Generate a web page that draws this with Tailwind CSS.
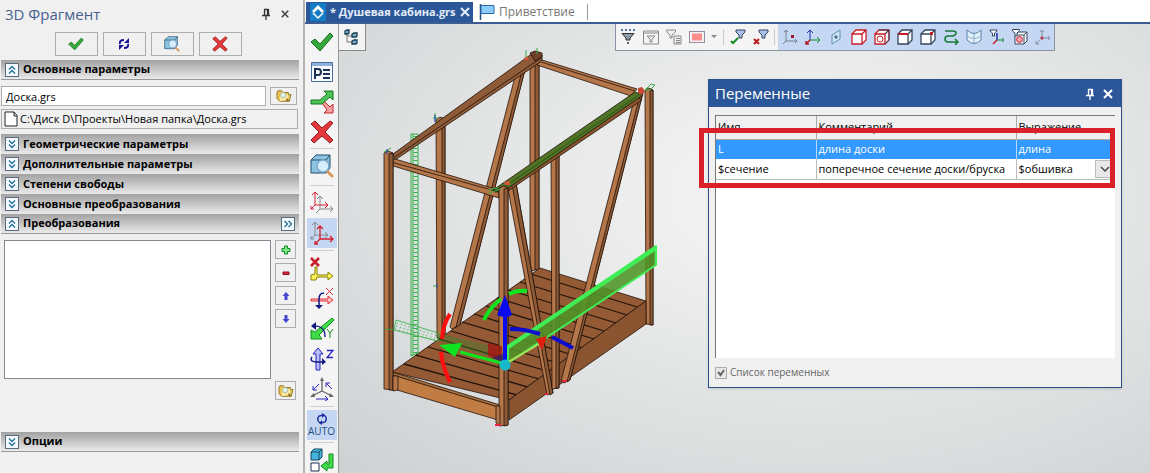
<!DOCTYPE html>
<html lang="ru">
  <head>
    <meta charset="UTF-8" />
    <meta name="viewport" content="width=device-width, initial-scale=1.0" />
    <title>Душевая кабина.grs</title>
    <script src="https://cdn.jsdelivr.net/npm/@tailwindcss/browser@4"></script>
  </head>
  <body class="flex h-screen overflow-hidden bg-[#f0f0f0] font-['Open_Sans',sans-serif] text-[11px] text-black">
    <!-- Shared icons -->
    <svg class="hidden">
      <symbol id="check" viewBox="0 0 24 24">
        <path d="M1 12l4-3 5 5L20 3l3 3L10 21z" fill="#35a83a" stroke="#146b1c" />
      </symbol>
      <symbol id="cross" viewBox="0 0 24 24">
        <path d="M1 4l4-3 7 7 8-7 3 2-8 9 8 8-3 3-8-7-8 7-3-3 8-8z" fill="#e2383c" stroke="#8f1a20" />
      </symbol>
      <symbol id="lens" viewBox="0 0 24 24">
        <path d="M1 6l5-5h14v13l-4 5H1z" fill="#8cc4e2" stroke="#234c68" />
        <path d="M1 6h15v13M16 6l4-5" fill="none" stroke="#234c68" />
        <path d="M17 17l5 5" stroke="#d89a5a" stroke-width="3" stroke-linecap="round" />
        <circle cx="13" cy="12" r="6" fill="#d6edfb" stroke="#7ba8c6" stroke-width="1.500" />
      </symbol>
      <symbol id="folder" viewBox="0 0 18 16">
        <path d="M1 4l1-2h4l2 2h6v3l3-1-2 8H4L1 11z" fill="#e8c350" stroke="#8a6c1a" />
        <path d="M5 6h9v6l-10 2z" fill="#fbe9a6" />
        <circle cx="8" cy="7" r="3" fill="#e3f3f4" stroke="#a9b6a0" />
        <path d="M12 11l2 3" stroke="#8a6c1a" stroke-width="2" />
      </symbol>
      <symbol id="up" viewBox="0 0 14 14">
        <rect x="0.5" y="0.5" width="13" height="13" fill="#f4f9fd" stroke="#5a6b7c" />
        <path d="M4 6.500l3-3 3 3M4 10.500l3-3 3 3" fill="none" stroke="#1f6d9c" stroke-width="1.300" />
      </symbol>
      <symbol id="down" viewBox="0 0 14 14">
        <rect x="0.5" y="0.5" width="13" height="13" fill="#f4f9fd" stroke="#5a6b7c" />
        <path d="M4 3.500l3 3 3-3M4 7.500l3 3 3-3" fill="none" stroke="#1f6d9c" stroke-width="1.300" />
      </symbol>
      <symbol id="pin" viewBox="0 0 10 12">
        <path d="M3 1.500h4.500M3.500 1v6M6.500 1v6M7.500 1v6M1 7.500h8M5 8v4" fill="none" stroke="currentColor" stroke-width="1.300" />
      </symbol>
      <symbol id="close" viewBox="0 0 10 10">
        <path d="M1 1l8 8M9 1l-8 8" stroke="currentColor" stroke-width="2" />
      </symbol>
      <symbol id="cube" viewBox="0 0 16 16">
        <path d="M1 5l4-4h10v10l-4 4H1z" fill="#fff" />
        <path d="M1 5l4-4h10v10l-4 4M11 5l4-4" fill="none" stroke="currentColor" stroke-width="1.300" />
        <path d="M1 5h10v10H1z" fill="none" stroke="currentColor" stroke-width="1.300" />
      </symbol>
    </svg>

    <!-- Parameters panel -->
    <aside class="flex w-[300px] shrink-0 flex-col px-px">
      <header class="flex h-7 items-center gap-2 pr-2 pl-1">
        <h1 class="flex-1 text-[15px] text-[#45608f]">3D Фрагмент</h1>
        <button aria-label="Закрепить"><svg class="h-3 w-2.5 text-[#333]"><use href="#pin" /></svg></button>
        <button aria-label="Закрыть" class="p-0.5"><svg class="h-2 w-2 text-[#444]" viewBox="0 0 10 10"><use href="#close" /></svg></button>
      </header>
      <div class="mt-1 mb-1 flex justify-center gap-[5px] pr-1">
        <button aria-label="Применить" class="flex h-6 w-[43px] items-center justify-center border border-[#adadad]"><svg class="h-4 w-4"><use href="#check" /></svg></button>
        <button aria-label="Обновить" class="flex h-6 w-[43px] items-center justify-center border border-[#adadad]">
          <svg class="h-3.5 w-3" viewBox="0 0 12 14" fill="none"><path d="M2 7q-1-4 4-4M10 7q1 4-4 4" stroke="#1a1298" stroke-width="2" /><path d="M6 6h5V1zM6 8H1v5z" fill="#1a1298" /></svg>
        </button>
        <button aria-label="Просмотр" class="flex h-6 w-[43px] items-center justify-center border border-[#adadad]"><svg class="h-4 w-4"><use href="#lens" /></svg></button>
        <button aria-label="Отмена" class="flex h-6 w-[43px] items-center justify-center border border-[#adadad]"><svg class="h-4 w-4"><use href="#cross" /></svg></button>
      </div>

      <h2 class="flex h-5 items-center gap-1 border-b border-[#999] bg-linear-to-b from-[#a2a2a2] to-[#eaeaea] pl-1 font-bold"><svg class="h-3.5 w-3.5"><use href="#up" /></svg>Основные параметры</h2>
      <div class="mt-1.5 flex items-center justify-between pr-0.5">
        <input type="text" aria-label="Файл" value="Доска.grs" class="h-5 w-[265px] border border-[#adadad] bg-white px-1" />
        <button aria-label="Открыть" class="flex h-[18px] w-[27px] items-center justify-center border border-[#adadad]"><svg class="h-3.5 w-4"><use href="#folder" /></svg></button>
      </div>
      <div class="mt-[3px] mr-px mb-[5px] flex h-5 items-center gap-0.5 border border-[#adadad] pl-0.5">
        <svg class="h-4 w-3.5" viewBox="0 0 14 16"><path d="M1 1h9l3 3.500V15H1z" fill="#fff" stroke="#222" /><path d="M10 1v4h3" fill="none" stroke="#222" /></svg>
        C:\Диск D\Проекты\Новая папка\Доска.grs
      </div>
      <h2 class="flex h-5 items-center gap-1 bg-linear-to-b from-[#a2a2a2] to-[#eaeaea] pl-1 font-bold"><svg class="h-3.5 w-3.5"><use href="#down" /></svg>Геометрические параметры</h2>
      <h2 class="flex h-5 items-center gap-1 bg-linear-to-b from-[#a2a2a2] to-[#eaeaea] pl-1 font-bold"><svg class="h-3.5 w-3.5"><use href="#down" /></svg>Дополнительные параметры</h2>
      <h2 class="flex h-5 items-center gap-1 bg-linear-to-b from-[#a2a2a2] to-[#eaeaea] pl-1 font-bold"><svg class="h-3.5 w-3.5"><use href="#down" /></svg>Степени свободы</h2>
      <h2 class="flex h-5 items-center gap-1 bg-linear-to-b from-[#a2a2a2] to-[#eaeaea] pl-1 font-bold"><svg class="h-3.5 w-3.5"><use href="#down" /></svg>Основные преобразования</h2>
      <h2 class="flex h-5 items-center gap-1 border-b border-[#999] bg-linear-to-b from-[#a2a2a2] to-[#eaeaea] px-1 font-bold">
        <svg class="h-3.5 w-3.5"><use href="#up" /></svg><span class="flex-1">Преобразования</span>
        <svg class="h-3.5 w-3.5 rotate-90"><use href="#up" /></svg>
      </h2>

      <div class="mt-1.5 flex gap-1 pr-[3px] pl-[3px]">
        <div class="h-[139px] flex-1 border border-[#828790] bg-white"></div>
        <div class="flex w-[21px] flex-col gap-1">
          <button aria-label="Добавить" class="flex h-[19px] items-center justify-center border border-[#adadad]"><svg class="h-2.5 w-2.5" viewBox="0 0 10 10"><path d="M3.500 1h3v2.500H9v3H6.500V9h-3V6.500H1v-3h2.500z" fill="#7ce887" stroke="#128a20" /></svg></button>
          <button aria-label="Удалить" class="flex h-[19px] items-center justify-center border border-[#adadad]"><svg class="h-2.5 w-2.5" viewBox="0 0 10 10"><path d="M2 4h6v2.500H2z" fill="#d93545" stroke="#8f1020" /></svg></button>
          <button aria-label="Вверх" class="flex h-[19px] items-center justify-center border border-[#adadad]"><svg class="h-2.5 w-2.5" viewBox="0 0 10 10"><path d="M5 1l3.500 4h-2v4h-3V5h-2z" fill="#4246d0" /></svg></button>
          <button aria-label="Вниз" class="flex h-[19px] items-center justify-center border border-[#adadad]"><svg class="h-2.5 w-2.5" viewBox="0 0 10 10"><path d="M5 9l3.500-4h-2V1h-3v4h-2z" fill="#4246d0" /></svg></button>
        </div>
      </div>
      <div class="mt-0.5 mb-8 flex justify-end pr-[3px]">
        <button aria-label="Открыть набор" class="flex h-[19px] w-[21px] items-center justify-center border border-[#adadad]"><svg class="h-3.5 w-4"><use href="#folder" /></svg></button>
      </div>
      <h2 class="flex h-5 items-center gap-1 border-b border-[#999] bg-linear-to-b from-[#a2a2a2] to-[#eaeaea] pl-1 font-bold"><svg class="h-3.5 w-3.5"><use href="#down" /></svg>Опции</h2>
    </aside>

    <main class="ml-[3px] flex min-w-0 flex-1 flex-col border-l-2 border-[#b4b4b4]">
      <!-- Document tabs -->
      <nav class="flex h-6 shrink-0 items-end border-b-2 border-[#3b5d92] bg-white">
        <a href="#" class="ml-px flex h-5 w-[167px] items-center gap-1 bg-[#2b579a] pl-1 font-bold whitespace-nowrap text-[#e4edf8]">
          <svg class="h-5 w-4 shrink-0" viewBox="0 0 16 18"><path d="M0 0h16v18H0z" fill="#147bc4" /><path d="M8 2l6 6-2 2-4-4-4 4-2-2zM2 10l2 0 4 4 4-4h2l-6 6z" fill="#fff" /></svg>
          <span class="flex-1">* Душевая кабина.grs</span>
          <svg class="mr-1 h-2.5 w-2.5 shrink-0"><use href="#close" /></svg>
        </a>
        <a href="#" class="flex h-5 items-center gap-1 pl-1.5 text-xs text-[#777]">
          <svg class="h-4 w-4" viewBox="0 0 16 16"><path d="M1.500 0v16" stroke="#234f83" stroke-width="1.500" /><path d="M2 1.500h13v8H2z" fill="#8dccfa" stroke="#2b6ba8" /></svg>
          Приветствие
        </a>
        <span class="mb-0.5 ml-3 h-4 w-px bg-[#999]"></span>
      </nav>

      <div class="flex min-h-0 flex-1">
        <!-- Command bar -->
        <div class="flex w-[34px] shrink-0 flex-col items-center border-r border-[#999] bg-[#f4f4f4] pt-[3px]">
          <button aria-label="Завершить" class="flex h-[30px] w-[30px] shrink-0 items-center justify-center"><svg class="h-6 w-6"><use href="#check" /></svg></button>
          <button aria-label="Параметры" class="flex h-[30px] w-[30px] shrink-0 items-center justify-center">
            <svg class="h-6 w-6" viewBox="0 0 24 24"><path d="M1.500 2.500h21v19h-21z" fill="#f8fbff" stroke="#4a6f9f" /><path d="M2 3h20v3H2z" fill="#8fb0dd" /><path d="M5 19V9h3a2.500 2.500 0 010 6H5M13 10h7M13 14h7M13 18h7" fill="none" stroke="#1c3154" stroke-width="2" /></svg>
          </button>
          <button aria-label="Варианты" class="flex h-[30px] w-[30px] shrink-0 items-center justify-center">
            <svg class="h-6 w-6" viewBox="0 0 24 24"><path d="M12 13l2-2 6 6 3-3v9h-9l3-3z" fill="#f4a0a0" stroke="#c02a2a" /><path d="M1 10h9l7-6-3-3h9v9l-3-3-8 7H1z" fill="#4cc456" stroke="#14751f" /></svg>
          </button>
          <button aria-label="Отменить" class="flex h-[30px] w-[30px] shrink-0 items-center justify-center"><svg class="h-6 w-6"><use href="#cross" /></svg></button>
          <hr class="mt-px mb-0.5 w-6 border-[#d0d0d0]" />
          <button aria-label="Предпросмотр" class="flex h-[30px] w-[30px] shrink-0 items-center justify-center"><svg class="h-6 w-6"><use href="#lens" /></svg></button>
          <hr class="mt-1 mb-0.5 w-6 border-[#d0d0d0]" />
          <button aria-label="Исходная система координат" class="flex h-[30px] w-[30px] shrink-0 items-center justify-center">
            <svg class="h-6 w-6" viewBox="0 0 24 24" fill="none"><path d="M10 18V5M7 8l3-3 3 3M10 18h13M20 15l3 3-3 3M10 18l-4 4" stroke="#888" /><path d="M5 14V1M2 4l3-3 3 3M5 14h13M15 11l3 3-3 3M5 14l-4 4M1 15v3h3" stroke="#d3202d" /></svg>
          </button>
          <button aria-label="Целевая система координат" class="flex h-[30px] w-[30px] shrink-0 items-center justify-center bg-[#c5d7f2]">
            <svg class="h-6 w-6" viewBox="0 0 24 24" fill="none"><path d="M5 14V1M2 4l3-3 3 3M5 14h13M15 11l3 3-3 3M5 14l-4 4M1 15v3h3" stroke="#888" /><path d="M10 18V5M7 8l3-3 3 3M10 18h13M20 15l3 3-3 3M10 18l-5 5M5 20v3h3" stroke="#d3202d" stroke-width="1.300" /></svg>
          </button>
          <hr class="mt-0.5 mb-[3px] w-6 border-[#d0d0d0]" />
          <button aria-label="Сбросить привязку" class="flex h-[30px] w-[30px] shrink-0 items-center justify-center">
            <svg class="h-6 w-6" viewBox="0 0 24 24"><path d="M1 1l8 8M9 1l-8 8" stroke="#c81e28" stroke-width="2.500" /><path d="M5 10h2v8h11v-3l5 4-5 4v-3H7l-1 3H1v-5l4-1z" fill="#fff35a" stroke="#8a7f00" /></svg>
          </button>
          <button aria-label="Поворот вокруг X" class="flex h-[30px] w-[30px] shrink-0 items-center justify-center">
            <svg class="h-6 w-6" viewBox="0 0 24 24" fill="none"><path d="M1 12h17V9l5 4-5 4v-3H1z" fill="#ffc0c0" stroke="#e0303a" /><path d="M16 1l7 7M23 1l-7 7" stroke="#e0303a" /><path d="M14 6q-5 0-5 6v7" stroke="#101a80" stroke-width="1.500" /><path d="M5 18h8l-4 4z" fill="#101a80" /></svg>
          </button>
          <button aria-label="Поворот вокруг Y" class="flex h-[30px] w-[30px] shrink-0 items-center justify-center">
            <svg class="h-6 w-6" viewBox="0 0 24 24" fill="none"><path d="M22 1l2 2L9 18l3 4H1V13l4 2z" fill="#3fdc4a" stroke="#149020" /><path d="M17 12l3 4 3-4M20 16v5" stroke="#149020" /><path d="M3 9q12-1 12 11" stroke="#101a80" stroke-width="1.300" /><path d="M6 5v8L1 9z" fill="#101a80" /></svg>
          </button>
          <button aria-label="Поворот вокруг Z" class="flex h-[30px] w-[30px] shrink-0 items-center justify-center">
            <svg class="h-6 w-6" viewBox="0 0 24 24" fill="none"><path d="M8 1l5 6h-3v16H6V7H3z" fill="#b9bdf8" stroke="#2424c0" /><path d="M17 3.500h6l-6 7h6" stroke="#2424c0" stroke-width="1.300" /><path d="M2 10q-3 5 5 5h6" stroke="#101a80" stroke-width="1.500" /><path d="M12 11v7l4-3z" fill="#101a80" /></svg>
          </button>
          <button aria-label="Изометрия" class="flex h-[30px] w-[30px] shrink-0 items-center justify-center">
            <svg class="h-6 w-6" viewBox="0 0 24 24" fill="none"><path d="M12 14V2M12 14L2 19M12 14l10 5" stroke="#666" stroke-width="1.300" /><path d="M10 4l2-4 2 4zM4 16l-4 4h5zM20 16l4 4h-5z" fill="#666" /><path d="M9 7l-6 6v-4M3 13h4M22 12l-6-6v4M16 6h4M6 22h12M15 19l3 3-3 2" stroke="#2424c0" /></svg>
          </button>
          <hr class="mt-0.5 mb-[3px] w-6 border-[#d0d0d0]" />
          <button class="flex h-[30px] w-[30px] shrink-0 flex-col items-center justify-center bg-[#c5d7f2] text-[10px] leading-3 text-[#234f83]">
            <svg class="h-3 w-3" viewBox="0 0 12 12" fill="none"><path d="M4 10Q0 7 3 3l4-1M8 2q4 3 1 7l-4 1" stroke="#1a2aa0" stroke-width="1.400" /><path d="M6 0l3 2-3 3zM6 7l-3 3 3 2z" fill="#1a2aa0" /></svg>
            AUTO
          </button>
          <hr class="mt-0.5 mb-0.5 w-6 border-[#d0d0d0]" />
          <button aria-label="Вставить" class="flex h-[30px] w-[30px] shrink-0 items-center justify-center">
            <svg class="h-6 w-6" viewBox="0 0 24 24"><path d="M1 4l3-3h8v8l-3 3H1z" fill="#46b5dd" stroke="#12455c" /><path d="M1 4h8v8M9 4l3-3" fill="none" stroke="#12455c" /><path d="M1 15h8v8H1z" fill="#fff" stroke="#1c3154" /><path d="M19 6h4v14h-6v3l-6-5 6-5v3h2z" fill="#3fdc4a" stroke="#128a20" /></svg>
          </button>
        </div>

        <!-- 3D view -->
        <section class="relative flex-1 overflow-hidden bg-radial-[at_58%_38%] from-[#f0f0f0] from-20% to-[#cdd1d2]">
          <button aria-label="Дерево модели" class="absolute top-0 left-0 flex h-[27px] w-[27px] items-center justify-center border-r border-b border-[#888] bg-[#f4f4f4]">
            <svg class="h-4 w-4" viewBox="0 0 16 16"><path d="M3 5v8h5M3 7h5" fill="none" stroke="#777" /><path d="M1 2l2-1h2v3L4 5H1zM8 5l2-1h3v3l-1 1H8zM8 12l2-1h3v3l-1 1H8z" fill="#7bb0c8" stroke="#183c50" stroke-width="1.300" /></svg>
          </button>

          <svg class="absolute top-[21px] left-[41px] h-[385px] w-[290px]" viewBox="380 45 290 385" stroke-linejoin="round">
            <!-- Back frame -->
            <g fill="#b5764a" stroke="#22130a" stroke-width=".8">
              <path d="M436 120l4-3 5 2v219h-8z" /><path d="M442 121l3-1v218h-3z" fill="#8f5a36" />
              <path d="M530 62h9v206l-9 4z" /><path d="M535 62h4v207l-4 1z" fill="#8f5a36" />
              <path d="M645 90l4-2 4 2v235l-7-1z" /><path d="M650 91l3-1v235h-3z" fill="#8f5a36" />
            </g>
            <path d="M411 134h7v219l-7 3zM413 134v221" fill="none" stroke="#2faf43" />
            <path d="M415.500 136v218" stroke="#2faf43" stroke-width="4" stroke-dasharray="1 3" />
            <!-- Floor -->
            <g stroke="#22130a" stroke-width=".8">
              <path d="M392 372l148-104 106 33-137 99z" fill="#935a35" />
              <path d="M404 364l113 31M416 355l112 32M428 347l111 32M439 339l111 33M451 331l110 33M462 322l111 33M474 314l109 34M486 306l108 33M497 298l107 33M509 290l107 33M520 282l107 33M531 274l106 33" fill="none" stroke-width="1.300" />
              <path d="M392 372l108 33v3l-108-33z" fill="#a9703f" />
              <path d="M396 376l102 31v13l-101-30z" fill="#c07c42" />
              <path d="M509 400l137-99v23l-137 96z" fill="#8a5430" />
            </g>
            <!-- Braces and beams -->
            <g fill="#b5764a" stroke="#22130a" stroke-width=".8">
              <path d="M517 69l9-4-66 259-8 5-2-2z" /><path d="M523 67l3-1-66 259-4 2z" fill="#8f5a36" />
              <path d="M635 96l8-4-73 288-6 3-3-2z" /><path d="M640 95l3-2-73 287-3 2z" fill="#8f5a36" />
              <path d="M393 154l140-101 9 2v6l-147 99z" fill="#8e5a38" /><path d="M395 157l146-99" fill="none" />
              <path d="M530 53l5-2 7 2v4l-7 4z" fill="#70422a" />
              <path d="M537 65l5-5 95 29-6 7z" /><path d="M541 62l94 29" fill="none" />
              <path d="M390 160l5-1 104 31v8l-109-33z" /><path d="M391 162l108 30" fill="none" />
              <path d="M384 153l4-2 5 2v237l-9-1z" /><path d="M389 154l4-1v237h-4z" fill="#8f5a36" />
              <path d="M393 376h5v14l-5 1z" />
              <path d="M507 184l9-1 37 210-6 2z" /><path d="M512 184l4-1 37 210-3 2z" fill="#8f5a36" />
              <path d="M551 154l4-3 4 2v235l-7 1z" /><path d="M556 154l3-1v235h-3z" fill="#8f5a36" />
              <path d="M495 192l142-95 5 3-134 91z" fill="#8a5430" />
              <path d="M493 190l142-98 8 3-139 96z" fill="#4f7426" />
              <path d="M497 192l142-97" fill="none" stroke="#274b10" />
              <path d="M499 188l5-2 4 2v237l-9 1z" /><path d="M504 189l4-1v237l-4 1z" fill="#8f5a36" />
              <path d="M496 406h4v19l-4-2z" />
            </g>
            <path d="M638 88l4-1 3 4-3 4-4-2z" fill="#c84a36" /><path d="M504 182l6-1v4h-5zM524 58l4-2v4h-4z" fill="#d3563c" />
            <path d="M645 90l6-6 4 1-5 5zM488 190l9-2M489 193l12-4M526 50v8M537 48v6M384 152l7-4M433 118h5M435 113v8M433 286h5" fill="none" stroke="#2faf43" />
            <path d="M387 149v5M435 115v7M437 284v3" stroke="#2b35c8" />
            <path d="M495 425h6M545 394h3M562 381h5" stroke="#e8243f" stroke-width="2" />
            <path d="M385 329l9 1 2-10 42 13v8l-44-11" fill="none" stroke="#2faf43" stroke-width=".8" />
            <path d="M397 323l41 13M396 326l41 13M395 329l41 12" stroke="#2faf43" stroke-dasharray="1 3" />
            <path d="M438 333l50 12v11l-50-15z" fill="#2d8a2e" fill-opacity=".35" />
            <!-- Moved plank -->
            <path d="M508 347l148-101v19L508 363z" fill="#4f9427" fill-opacity=".88" stroke="#3fee55" stroke-width="2" />
            <path d="M508 347l148-99" fill="none" stroke="#3fee55" stroke-width="4" />
            <!-- Manipulator -->
            <g fill="none" stroke-width="4">
              <path d="M450 314q-7 10-8 25M441 352q1 14 9 30" stroke="#ff1010" />
              <path d="M484 320q6-13 17-21M509 294q8-4 18-3" stroke="#0fe51f" />
              <path d="M510 329q16 0 30 5M552 337l21 11" stroke="#0d0dd0" />
            </g>
            <path d="M488 343l14 3v15l-14-5z" fill="#9c1b12" fill-opacity=".85" />
            <path d="M492 358l13-5v10z" fill="#30206a" fill-opacity=".8" />
            <path d="M505 364l-45-12" stroke="#0fe51f" stroke-width="3" /><path d="M439 345l23-2-7 14z" fill="#0fe51f" />
            <path d="M505 364l34-20" stroke="#a8e05a" stroke-width="2" /><path d="M547 336l-11 3 6 11z" fill="#e01d10" />
            <path d="M505 364v-52" stroke="#0a0af0" stroke-width="4" /><path d="M505 295l-8 20q8 4 15 0z" fill="#0a0af0" />
            <circle cx="505" cy="365" r="5.500" fill="#16b9c9" />
          </svg>

          <!-- Selection filters -->
          <div class="absolute top-0 right-[95px] flex h-[27px] items-center border border-t-0 border-[#8a93a3] bg-[#f4f4f4] text-[#33465f]">
            <button aria-label="Фильтр" class="flex w-[23px] justify-center"><svg class="h-4 w-4" viewBox="0 0 16 16"><path d="M1 1h14" stroke="#234f83" stroke-width="1.500" stroke-dasharray="2 2" /><path d="M2 4.500h12L10 9v2H6V9z" fill="#8b9daa" stroke="#333" /><path d="M8 13v2" stroke="#333" stroke-width="1.500" /></svg></button>
            <button aria-label="Окно фильтра" class="flex w-[23px] justify-center"><svg class="h-4 w-4" viewBox="0 0 16 16"><path d="M0.500 2h15v13h-15zM1 4h14" fill="none" stroke="#888" /><path d="M4 7h8l-3 3v3H7v-3z" fill="#eee" stroke="#888" /></svg></button>
            <button aria-label="Список фильтров" class="flex w-[23px] justify-center"><svg class="h-4 w-4" viewBox="0 0 16 16" fill="#eee" stroke="#888"><path d="M0.500 1h9v2L6 6v3H4V6L1 3z" /><path d="M8 7h7v8H8zM10 9.500h4M10 11.500h4M10 13.500h4" /></svg></button>
            <button aria-label="Выбор рамкой" class="flex w-[23px] justify-center"><svg class="h-4 w-4" viewBox="0 0 16 16"><path d="M0.500 2.500h15v11h-15z" fill="none" stroke="#402050" stroke-dasharray="1 1" /><path d="M3 4.500h10v7H3z" fill="#ff8d8d" /></svg></button>
            <button aria-label="Ещё" class="flex w-3 justify-center"><svg class="h-1 w-2" viewBox="0 0 8 4"><path d="M1 0h6L4 3z" fill="#888" /></svg></button>
            <span class="mr-0.5 ml-[3px] h-4 w-px bg-[#ccc]"></span>
            <button aria-label="Принять фильтр" class="flex w-[23px] justify-center"><svg class="h-4 w-4" viewBox="0 0 16 16"><path d="M6 1h9v2l-3 3v3H9V6L6 3z" fill="#a9c0ea" stroke="#33465f" /><path d="M1 12l2 2 5-5" fill="none" stroke="#168c20" stroke-width="2" /></svg></button>
            <button aria-label="Снять фильтр" class="flex w-[23px] justify-center"><svg class="h-4 w-4" viewBox="0 0 16 16"><path d="M6 1h9v2l-3 3v3H9V6L6 3z" fill="#a9c0ea" stroke="#33465f" /><path d="M1 10l5 5M6 10l-5 5" stroke="#c01820" stroke-width="2" /></svg></button>
            <span class="mr-[3px] ml-0.5 h-4 w-px bg-[#ccc]"></span>
            <div class="flex h-full items-center bg-[#c5d7f2]">
              <button aria-label="Точки" class="flex w-[23px] justify-center"><svg class="h-4 w-4" viewBox="0 0 16 16"><path d="M4 12V1M2 3l2-2 2 2M4 12h11M13 10l2 2-2 2M4 12l-3 3" fill="none" stroke="#708090" /><path d="M9 6h3v3H9z" fill="#a01830" /></svg></button>
              <button aria-label="Системы координат" class="flex w-[23px] justify-center"><svg class="h-4 w-4" viewBox="0 0 16 16" fill="none"><path d="M5 11V1M2 4l3-3 3 3" stroke="#1c2fb0" /><path d="M5 11h10M12 8l3 3-3 3" stroke="#128a30" /><path d="M5 11l-4 4M1 12v3h3" stroke="#b01820" stroke-width="1.500" /></svg></button>
              <button aria-label="Плоскости" class="flex w-[23px] justify-center"><svg class="h-4 w-4" viewBox="0 0 16 16"><path d="M4 6l8-5v9l-8 5z" fill="#cfe5f6" stroke="#5d8fb8" /><path d="M7 7h2v2H7z" fill="none" stroke="#335577" /></svg></button>
              <button aria-label="Тела" class="flex w-[23px] justify-center text-[#c81e28]"><svg class="h-4 w-4"><use href="#cube" /></svg></button>
              <button aria-label="Грани" class="flex w-[23px] justify-center text-[#c81e28]"><svg class="h-4 w-4" viewBox="0 0 16 16"><use href="#cube" /><path d="M11 5l4-4v10l-4 4M5 1h10" fill="none" stroke="#33465f" /><circle cx="6" cy="10" r="3" fill="none" stroke="#c81e28" /></svg></button>
              <button aria-label="Рёбра" class="flex w-[23px] justify-center"><svg class="h-4 w-4" viewBox="0 0 16 16"><use href="#cube" /><path d="M1 5h10" stroke="#c81e28" stroke-width="2" /></svg></button>
              <button aria-label="Вершины" class="flex w-[23px] justify-center"><svg class="h-4 w-4" viewBox="0 0 16 16"><use href="#cube" /><path d="M10 3h3v3h-3z" fill="#c81e28" /></svg></button>
              <button aria-label="Пути" class="flex w-[23px] justify-center"><svg class="h-4 w-4" viewBox="0 0 16 16" fill="none" stroke="#147a34" stroke-width="1.500"><path d="M2 2h8q3 0 3 2t-3 3H5q-3 0-3 3t3 3h9M12 10l3 3-3 3" /></svg></button>
              <button aria-label="Поверхности" class="flex w-[23px] justify-center"><svg class="h-4 w-4" viewBox="0 0 16 16"><path d="M1 1q7 7 14 0v10q-7 7-14 0z" fill="#e3f1fb" stroke="#5484ae" /><path d="M8 5v9M1 7q7 5 14 0" fill="none" stroke="#8fb0cc" /></svg></button>
              <button aria-label="Фильтр осей" class="flex w-[23px] justify-center"><svg class="h-4 w-4" viewBox="0 0 16 16" fill="none"><path d="M1 1h7v1L5.500 4v3h-2V4L1 2z" fill="#fff" stroke="#33465f" /><path d="M8 11V4" stroke="#1c2fb0" stroke-width="1.500" /><path d="M8 11h7M13 9l2 2-2 2" stroke="#128a30" /><path d="M8 11l-4 4" stroke="#c81e28" stroke-width="1.500" /></svg></button>
              <button aria-label="Фильтр граней" class="flex w-[23px] justify-center"><svg class="h-4 w-4" viewBox="0 0 16 16"><path d="M3 7l3-4h9v9l-3 3H3z" fill="#fff" stroke="#33465f" /><path d="M3 6h9v9M12 6l3-3" fill="none" stroke="#33465f" /><circle cx="7.500" cy="10.500" r="3" fill="#f5a6b0" stroke="#c81e28" /><path d="M0.500 0.500h7v1L5 4v3H3V4L0.500 2z" fill="#fff" stroke="#33465f" /></svg></button>
              <button aria-label="Начало координат" class="flex w-[23px] justify-center"><svg class="h-4 w-4" viewBox="0 0 16 16" fill="none" stroke="#8090a0"><path d="M7 7V1M5 3l2-2 2 2M9 9h6M13 7l2 2-2 2M5 11l-4 4M1 12v3h3" /><path d="M6 8h2v2H6z" stroke="#b01830" /></svg></button>
            </div>
          </div>

          <!-- Variables window -->
          <div class="absolute top-[55px] right-[28px] w-[414px] border border-[#2b4f86] bg-[#f0f0f0] shadow">
            <div class="flex h-[27px] items-center gap-2 bg-[#2b579a] pr-2 pl-1.5 text-white">
              <h2 class="flex-1 text-[15px]">Переменные</h2>
              <button aria-label="Закрепить окно"><svg class="h-3 w-2.5"><use href="#pin" /></svg></button>
              <button aria-label="Закрыть окно"><svg class="h-2.5 w-2.5"><use href="#close" /></svg></button>
            </div>
            <div class="mx-1.5 mt-2 h-[243px] border-t border-l border-[#777] bg-white">
              <table class="w-full table-fixed border-collapse text-left">
                <thead>
                  <tr class="h-[23px] bg-[#f0f0f0]">
                    <th class="w-[100px] border-r border-b border-[#aaa] px-0.5 font-normal">Имя</th>
                    <th class="w-[200px] border-r border-b border-[#aaa] px-0.5 font-normal">Комментарий</th>
                    <th class="border-b border-[#aaa] px-0.5 font-normal">Выражение</th>
                  </tr>
                </thead>
                <tbody class="whitespace-nowrap">
                  <tr class="h-5 bg-[#3399ff] text-white">
                    <td class="border-r border-[#b8d8f8] px-0.5">L</td>
                    <td class="border-r border-[#b8d8f8] px-0.5">длина доски</td>
                    <td class="px-0.5">длина</td>
                  </tr>
                  <tr class="h-5">
                    <td class="border-r border-b border-[#bbb] px-0.5">$сечение</td>
                    <td class="border-r border-b border-[#bbb] px-0.5">поперечное сечение доски/бруска</td>
                    <td class="border-b border-[#bbb] pl-0.5">
                      <div class="flex items-center justify-between">$обшивка
                        <button aria-label="Выбрать выражение" class="flex h-[18px] w-5 items-center justify-center border border-[#bbb] bg-[#e8e8e8]"><svg class="h-2 w-2.5" viewBox="0 0 10 8"><path d="M1 2l4 4 4-4" fill="none" stroke="#444" stroke-width="1.500" /></svg></button>
                      </div>
                    </td>
                  </tr>
                </tbody>
              </table>
            </div>
            <label class="flex h-[29px] items-center gap-[3px] pl-1.5 text-[10px] text-[#666]">
              <input type="checkbox" checked disabled class="sr-only" />
              <svg class="h-3 w-3" viewBox="0 0 12 12"><path d="M0.500 0.500h11v11H0.500z" fill="#e8e8e8" stroke="#aaa" /><path d="M3 5l2.500 3L9 3" fill="none" stroke="#666" stroke-width="2" /></svg>
              Список переменных
            </label>
            <div class="pointer-events-none absolute top-12 -left-2.5 h-[60px] w-[416px] border-5 border-[#dc202a]"></div>
          </div>
        </section>
      </div>
    </main>
  </body>
</html>
